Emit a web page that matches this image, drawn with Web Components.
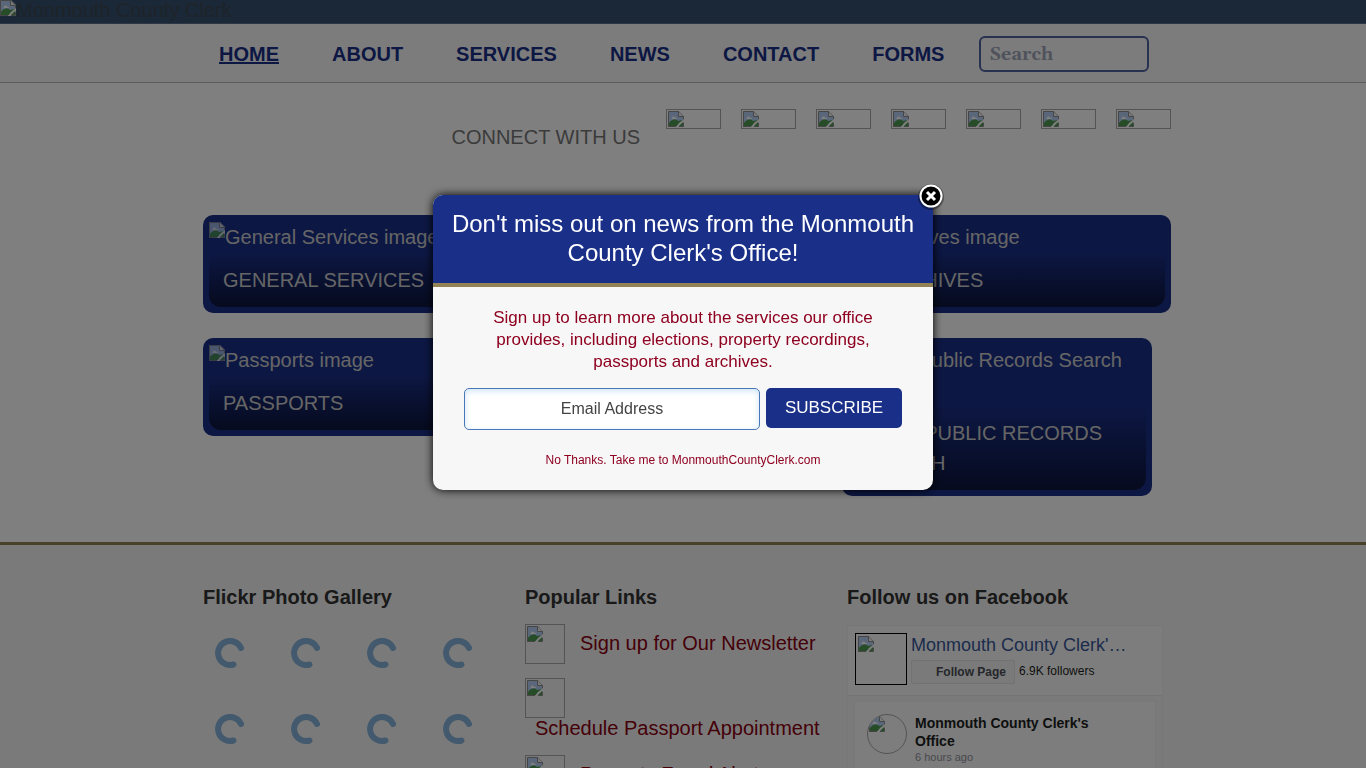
<!DOCTYPE html>
<html lang="en">
<head>
<meta charset="utf-8">
<meta name="viewport" content="width=device-width, initial-scale=1">
<title>Monmouth County Clerk</title>
<style>
	html, body {
		margin: 0;
		height: 100%;
	}
	body {
		overflow: hidden;
		font-family: "Liberation Sans", Arial, sans-serif;
		font-size: 20px;
		line-height: 30px;
		color: #333;
		background: #fff;
		--navy: #1a2f87;
		--gold: #938354;
		--maroon: #8f0020;
	}
</style>
</head>
<body>
<clerk-page></clerk-page>

<script>
class BaseElement extends HTMLElement {
	constructor() {
		super();
		this.attachShadow({ mode: 'open' });
		this.shadowRoot.innerHTML = this.render();
	}
}

// placeholder for a picture that is not loaded
class MissingImage extends BaseElement {
	render() {
		return /*html*/`
			<style>
				:host {
					display: inline-block;
					box-sizing: border-box;
					flex: none;
					line-height: 0;
				}
				:host([framed]) {
					border: 1px solid #a8a8a8;
					padding: 1px;
				}
				:host([round]) {
					border-radius: 50%;
					overflow: hidden;
				}
				svg {
					display: block;
				}
			</style>
			<svg width="16" height="16" viewBox="0 0 16 16" aria-hidden="true">
				<path d="M0 0h11l5 5v11H0z" fill="#ddd"/>
				<path d="M1 1h9v5h5v9H1z" fill="#b4cdf2"/>
				<path d="M4 7c0-2 3-2 3 0 2-1 3 1 1 1H4C3 8 3 7 4 7z" fill="#fff"/>
				<path d="M1 15v-3c2-3 6-5 9-2l5-1v6z" fill="#4c9a4f"/>
				<path d="M.5 16V.5h10l5 5V9" fill="none" stroke="#8c8c8c"/>
				<path d="M10.500.5v5h5" fill="#f4f4f4" stroke="#8c8c8c"/>
				<path d="M16 8v2l-6 6H8l3-4z" fill="#fff"/>
				<path d="M0 15.500h8M11 15.500h4.500V12" fill="none" stroke="#8c8c8c"/>
			</svg>
		`;
	}
}

class SiteBanner extends BaseElement {
	render() {
		return /*html*/`
			<style>
				:host {
					display: flex;
					align-items: flex-start;
					height: 23px;
					background: #345070;
					border-bottom: 1px solid #5a6c88;
					line-height: 20px;
				}
				span {
					color: #3d4852;
				}
			</style>
			<missing-image></missing-image><span><slot></slot></span>
		`;
	}
}

class SiteNav extends BaseElement {
	render() {
		return /*html*/`
			<style>
				:host {
					display: block;
					background: #f8f8f8;
					border-bottom: 1px solid #bbb;
				}
				nav {
					display: flex;
					align-items: center;
					gap: 53px;
					max-width: 960px;
					height: 58px;
					margin: 0 auto;
					padding-top: 1px;
					box-sizing: border-box;
				}
				::slotted(a) {
					color: var(--navy);
					font-weight: bold;
					text-decoration: none;
				}
				::slotted(a:first-child) {
					margin-left: 16px;
				}
				::slotted(a[aria-current]) {
					text-decoration: underline;
				}
				input {
					box-sizing: border-box;
					width: 170px;
					height: 36px;
					margin-left: -18px;
					padding: 2px 8px 0;
					border: 2px solid #4f62a0;
					border-radius: 6px;
					background: none;
					color: var(--navy);
					font: bold 18px Gelasio, Georgia, "Liberation Serif", serif;
				}
				input::placeholder {
					color: #a0a4b8;
				}
			</style>
			<nav>
				<slot></slot>
				<input type="search" placeholder="Search" aria-label="Search">
			</nav>
		`;
	}
}

class SocialBar extends BaseElement {
	render() {
		return /*html*/`
			<style>
				:host {
					display: flex;
					justify-content: flex-end;
					align-items: flex-start;
					gap: 20px;
					padding-top: 26px;
				}
				span {
					margin: 13px 6px 0 0;
					color: #777;
				}
				a {
					display: flex;
				}
				missing-image {
					width: 55px;
					height: 20px;
				}
			</style>
			<span><slot></slot></span>
			${'<a href="#" aria-label="Social media"><missing-image framed></missing-image></a>'.repeat(7)}
		`;
	}
}

class ServiceTile extends BaseElement {
	render() {
		return /*html*/`
			<style>
				:host {
					display: block;
					box-sizing: border-box;
					width: 310px;
					padding: 7px 6px 6px;
					border-radius: 10px;
					background: var(--navy);
				}
				a {
					display: block;
					color: #ccc;
					text-decoration: none;
				}
				missing-image {
					vertical-align: top;
					opacity: .8;
				}
				h2 {
					margin: 0;
					padding: 13px 14px 12px;
					border-radius: 0 0 12px 12px;
					background: linear-gradient(rgba(0, 0, 0, 0), rgba(0, 0, 0, .55));
					font-size: 20px;
					font-weight: normal;
					text-transform: uppercase;
				}
			</style>
			<a href="#">
				<missing-image></missing-image><slot name="alt"></slot>
				<h2><slot></slot></h2>
			</a>
		`;
	}
}

class FooterColumn extends BaseElement {
	render() {
		return /*html*/`
			<style>
				:host {
					display: block;
				}
				h3 {
					margin: 0 0 12px;
					font-size: 20px;
				}
			</style>
			<h3><slot name="title"></slot></h3>
			<slot></slot>
		`;
	}
}

class PhotoGallery extends BaseElement {
	render() {
		const spinner = /*html*/`
			<svg width="30" height="30" viewBox="0 0 30 30" role="img" aria-label="Loading">
				<path d="M26 10A12 12 0 1 0 18.500 26.500" fill="none" stroke="#86b4dc" stroke-width="6" stroke-linecap="round"/>
			</svg>
		`;
		return /*html*/`
			<style>
				:host {
					display: grid;
					grid-template-columns: repeat(4, 30px);
					gap: 46px;
					padding: 14px 12px;
				}
			</style>
			${spinner.repeat(8)}
		`;
	}
}

class PopularLink extends BaseElement {
	render() {
		return /*html*/`
			<style>
				:host {
					display: block;
					margin-bottom: 14px;
				}
				a {
					display: flex;
					flex-wrap: wrap;
					align-items: center;
					column-gap: 5px;
					color: #8b0010;
					line-height: 20px;
					text-decoration: none;
				}
				missing-image {
					width: 40px;
					height: 40px;
				}
				span {
					padding: 0 0 3px 10px;
				}
			</style>
			<a href="#"><missing-image framed></missing-image><span><slot></slot></span></a>
		`;
	}
}

class PageFeed extends BaseElement {
	render() {
		return /*html*/`
			<style>
				:host {
					display: block;
					margin-top: 13px;
					border: 1px solid #efefef;
					background: #f5f5f5;
					color: #1c1e21;
					font-size: 12px;
					line-height: 18px;
				}
				header {
					display: flex;
					gap: 4px;
					padding: 7px 7px 10px;
					border-bottom: 1px solid #e9e9e9;
					background: #fbfbfb;
				}
				header missing-image {
					width: 52px;
					height: 52px;
					border: 1px solid #000;
					padding: 2px;
				}
				header a {
					color: #385898;
					font-size: 18px;
					line-height: 24px;
					text-decoration: none;
				}
				.actions {
					display: flex;
					gap: 4px;
					margin-top: 3px;
				}
				button {
					height: 24px;
					padding: 0 8px 0 24px;
					border: 1px solid #e4e4e4;
					border-radius: 2px;
					background: #f5f5f5;
					color: #4b4f56;
					font: bold 12px "Liberation Sans", Arial, sans-serif;
				}
				.actions span {
					line-height: 22px;
				}
				article {
					display: flex;
					gap: 8px;
					margin: 5px 6px 0;
					padding: 12px;
					border: 1px solid #f0f0f0;
					background: #fafafa;
				}
				article missing-image {
					width: 40px;
					height: 40px;
				}
				h4 {
					margin: 0;
					max-width: 200px;
					font-size: 14px;
				}
				time {
					display: block;
					color: #90949c;
					font-size: 11px;
					line-height: 14px;
				}
			</style>
			<header>
				<missing-image></missing-image>
				<div>
					<a href="#"><slot name="page"></slot></a>
					<div class="actions">
						<button type="button">Follow Page</button>
						<span><slot name="followers"></slot></span>
					</div>
				</div>
			</header>
			<article>
				<missing-image framed round></missing-image>
				<div>
					<h4><slot name="author"></slot></h4>
					<time><slot name="time"></slot></time>
				</div>
			</article>
		`;
	}
}

class SignupDialog extends BaseElement {
	render() {
		return /*html*/`
			<style>
				:host {
					position: fixed;
					inset: 0;
					display: flex;
					justify-content: center;
					align-items: flex-start;
					padding-top: 195px;
					background: rgba(0, 0, 0, .5);
				}
				section {
					position: relative;
					width: 500px;
					border-radius: 10px;
					background: #f7f7f7;
					box-shadow: 0 0 10px #000;
					text-align: center;
				}
				h1 {
					margin: 0;
					padding: 14px 16px 16px;
					border-bottom: 4px solid var(--gold);
					border-radius: 10px 10px 0 0;
					background: #1a2f87;
					color: #fff;
					font-size: 24px;
					font-weight: normal;
					line-height: 29px;
				}
				p {
					margin: 0;
					padding: 20px 50px 15px;
					color: var(--maroon);
					font-size: 17px;
					line-height: 22px;
				}
				form {
					display: flex;
					align-items: flex-start;
					gap: 6px;
					padding: 0 31px;
				}
				input {
					box-sizing: border-box;
					flex: 1;
					min-width: 0;
					height: 42px;
					border: 1px solid #4a77b5;
					border-radius: 5px;
					background: #fff;
					box-shadow: inset 0 2px 6px #cfe4f8;
					font: 16px "Liberation Sans", Arial, sans-serif;
					text-align: center;
				}
				input::placeholder {
					color: #444;
				}
				.subscribe {
					width: 136px;
					height: 40px;
					padding: 0;
					border: 0;
					border-radius: 5px;
					background: #1a2f87;
					color: #fff;
					font: 17px "Liberation Sans", Arial, sans-serif;
				}
				.dismiss {
					display: block;
					padding: 23px 0;
					color: var(--maroon);
					font-size: 12px;
					line-height: 14px;
					text-decoration: none;
				}
				.close {
					position: absolute;
					top: -14px;
					right: -13px;
					width: 30px;
					height: 30px;
					padding: 0;
					border: 0;
					background: none;
				}
				.close svg {
					display: block;
				}
			</style>
			<section role="dialog" aria-labelledby="title">
				<h1 id="title"><slot name="title"></slot></h1>
				<p><slot></slot></p>
				<form>
					<input type="email" placeholder="Email Address" aria-label="Email Address">
					<button class="subscribe" type="button">SUBSCRIBE</button>
				</form>
				<a class="dismiss" href="#"><slot name="dismiss"></slot></a>
				<button class="close" type="button" aria-label="Close">
					<svg width="30" height="30" viewBox="0 0 30 30" aria-hidden="true">
						<circle cx="15" cy="16" r="13" fill="#000" opacity=".35"/>
						<circle cx="15" cy="15" r="10.500" fill="#000" stroke="#fff" stroke-width="2"/>
						<path d="M11 11l8 8M19 11l-8 8" stroke="#fff" stroke-width="3"/>
					</svg>
				</button>
			</section>
		`;
	}
}

class ClerkPage extends BaseElement {
	render() {
		return /*html*/`
			<style>
				:host {
					display: block;
				}
				main {
					max-width: 968px;
					margin: 0 auto;
					padding-left: 8px;
				}
				.tiles {
					display: flex;
					justify-content: space-between;
					align-items: flex-start;
					margin-bottom: 25px;
				}
				.tiles:first-of-type {
					margin-top: 63px;
				}
				.tiles.short {
					margin: 0 19px 46px 0;
				}
				footer {
					border-top: 3px solid var(--gold);
					background: #f5f5f5;
				}
				.columns {
					display: grid;
					grid-template-columns: 317px 317px 1fr;
					gap: 5px;
					max-width: 960px;
					margin: 0 auto;
					padding-top: 37px;
				}
			</style>
			<site-banner>Monmouth County Clerk</site-banner>
			<site-nav>
				<a href="#" aria-current="page">HOME</a>
				<a href="#">ABOUT</a>
				<a href="#">SERVICES</a>
				<a href="#">NEWS</a>
				<a href="#">CONTACT</a>
				<a href="#">FORMS</a>
			</site-nav>
			<main>
				<social-bar>CONNECT WITH US</social-bar>
				<div class="tiles">
					<service-tile><span slot="alt">General Services image</span>General Services</service-tile>
					<service-tile><span slot="alt">Archives image</span>Archives</service-tile>
				</div>
				<div class="tiles short">
					<service-tile><span slot="alt">Passports image</span>Passports</service-tile>
					<service-tile><span slot="alt">Open Public Records Search image</span>Open Public Records Search</service-tile>
				</div>
			</main>
			<footer>
				<div class="columns">
					<footer-column>
						<span slot="title">Flickr Photo Gallery</span>
						<photo-gallery></photo-gallery>
					</footer-column>
					<footer-column>
						<span slot="title">Popular Links</span>
						<popular-link>Sign up for Our Newsletter</popular-link>
						<popular-link>Schedule Passport Appointment</popular-link>
						<popular-link>Property Fraud Alert</popular-link>
					</footer-column>
					<footer-column>
						<span slot="title">Follow us on Facebook</span>
						<page-feed>
							<span slot="page">Monmouth County Clerk'…</span>
							<span slot="followers">6.9K followers</span>
							<span slot="author">Monmouth County Clerk's Office</span>
							<span slot="time">6 hours ago</span>
						</page-feed>
					</footer-column>
				</div>
			</footer>
			<signup-dialog>
				<span slot="title">Don't miss out on news from the Monmouth County Clerk's Office!</span>
				Sign up to learn more about the services our office provides, including elections, property recordings, passports and archives.
				<span slot="dismiss">No Thanks. Take me to MonmouthCountyClerk.com</span>
			</signup-dialog>
		`;
	}
}

customElements.define('missing-image', MissingImage);
customElements.define('site-banner', SiteBanner);
customElements.define('site-nav', SiteNav);
customElements.define('social-bar', SocialBar);
customElements.define('service-tile', ServiceTile);
customElements.define('footer-column', FooterColumn);
customElements.define('photo-gallery', PhotoGallery);
customElements.define('popular-link', PopularLink);
customElements.define('page-feed', PageFeed);
customElements.define('signup-dialog', SignupDialog);
customElements.define('clerk-page', ClerkPage);
</script>
</body>
</html>
